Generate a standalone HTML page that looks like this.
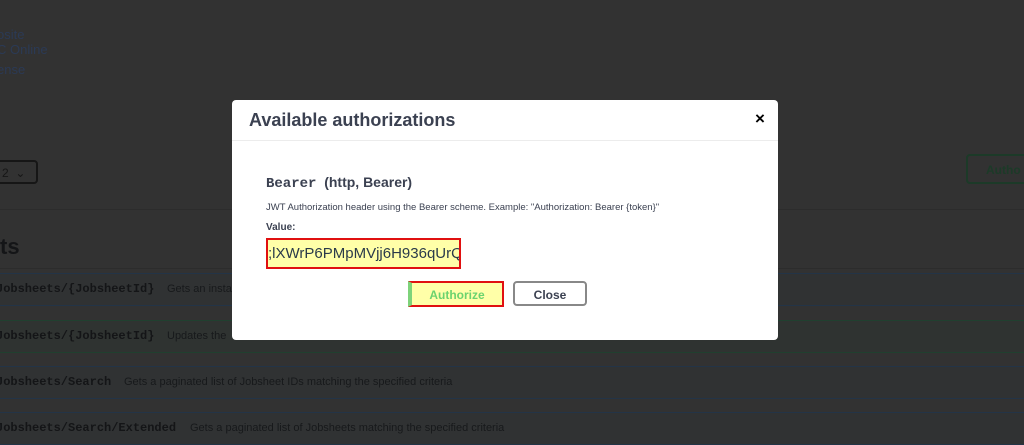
<!DOCTYPE html>
<html><head><meta charset="utf-8"><style>
*{margin:0;padding:0;box-sizing:border-box}
body{width:1024px;height:441px;overflow:hidden;background:#323232;font-family:"Liberation Sans",sans-serif;position:relative}
.a{position:absolute;white-space:nowrap}
.lnk{color:#2b3a55;font-size:13px}
.row{position:absolute;left:-2px;width:1030px;height:33px;border:1px solid #233447;background:#303233}
.row.g{border-color:#20402f;background:#2f3331}
.row .p{position:absolute;left:-3px;top:8px;font:bold 12px "Liberation Mono",monospace;color:#141517}
.row .d{position:absolute;top:9px;font-size:11px;color:#17191b}
.m{position:absolute;left:232px;top:100px;width:546px;height:240px;background:#fff;border-radius:4px}
</style></head><body>
<div class="a lnk" style="left:-3px;top:27px">osite</div>
<div class="a lnk" style="left:-3px;top:42px">C Online</div>
<div class="a lnk" style="left:-3px;top:62px">ense</div>
<div class="a" style="left:-10px;top:160px;width:48px;height:24px;border:2px solid #161616;border-radius:4px;font-size:12px;color:#161616;padding:4px 0 0 10px">2 &nbsp;&#8964;</div>
<div class="a" style="left:966px;top:154px;width:70px;height:30px;border:2px solid #1c3a28;border-radius:4px;font-weight:bold;font-size:12px;color:#1c3a28;padding:7px 0 0 18px">Autho</div>
<div class="a" style="left:0;top:209px;width:1024px;height:1px;background:#2c2c2c"></div>
<div class="a" style="left:0;top:234px;font:bold 22px 'Liberation Sans';color:#141517">ts</div>
<div class="a" style="left:0;top:268px;width:1024px;height:1px;background:#2c2c2c"></div>
<div class="row" style="top:273px"><span class="p">Jobsheets/{JobsheetId}</span><span class="d" style="left:168px">Gets an instance</span></div>
<div class="row g" style="top:320px"><span class="p">Jobsheets/{JobsheetId}</span><span class="d" style="left:168px">Updates the</span></div>
<div class="row" style="top:366px"><span class="p">Jobsheets/Search</span><span class="d" style="left:125px">Gets a paginated list of Jobsheet IDs matching the specified criteria</span></div>
<div class="row" style="top:412px"><span class="p">Jobsheets/Search/Extended</span><span class="d" style="left:191px">Gets a paginated list of Jobsheets matching the specified criteria</span></div>
<div class="m">
 <div class="a" style="left:0;top:0;width:546px;height:41px;border-bottom:1px solid #ececec"></div>
 <div class="a" style="left:17px;top:10px;font-weight:bold;font-size:18px;color:#3b4151">Available authorizations</div>
 <div class="a" style="left:523px;top:9px;font-weight:bold;font-size:17px;color:#000">&#215;</div>
 <div class="a" style="left:34px;top:74px;font-weight:bold;font-size:14px;color:#3b4151"><span style="font-family:'Liberation Mono',monospace">Bearer</span>&nbsp; (http, Bearer)</div>
 <div class="a" style="left:34px;top:102px;font-size:9.5px;color:#3b4151">JWT Authorization header using the Bearer scheme. Example: "Authorization: Bearer {token}"</div>
 <div class="a" style="left:34px;top:122px;font-weight:bold;font-size:10px;color:#3b4151">Value:</div>
 <div class="a" style="left:34px;top:138px;width:195px;height:31px;border:2px solid #e01010;background:#ffffa8;overflow:hidden;font-size:15px;color:#2a3a4a;padding:5px 0 0 4px;text-indent:-4px">;lXWrP6PMpMVjj6H936qUrQ|</div>
 <div class="a" style="left:176px;top:181px;width:96px;height:26px;border:2px solid #e01010;background:#ffffa8;border-left:4px solid #7ed37a;font-weight:bold;font-size:12px;color:#6bd36e;text-align:center;padding-top:5px">Authorize</div>
 <div class="a" style="left:281px;top:181px;width:74px;height:25px;border:2px solid #888;border-radius:4px;font-weight:bold;font-size:12px;color:#3b4151;text-align:center;padding-top:5px">Close</div>
</div>
</body></html>
